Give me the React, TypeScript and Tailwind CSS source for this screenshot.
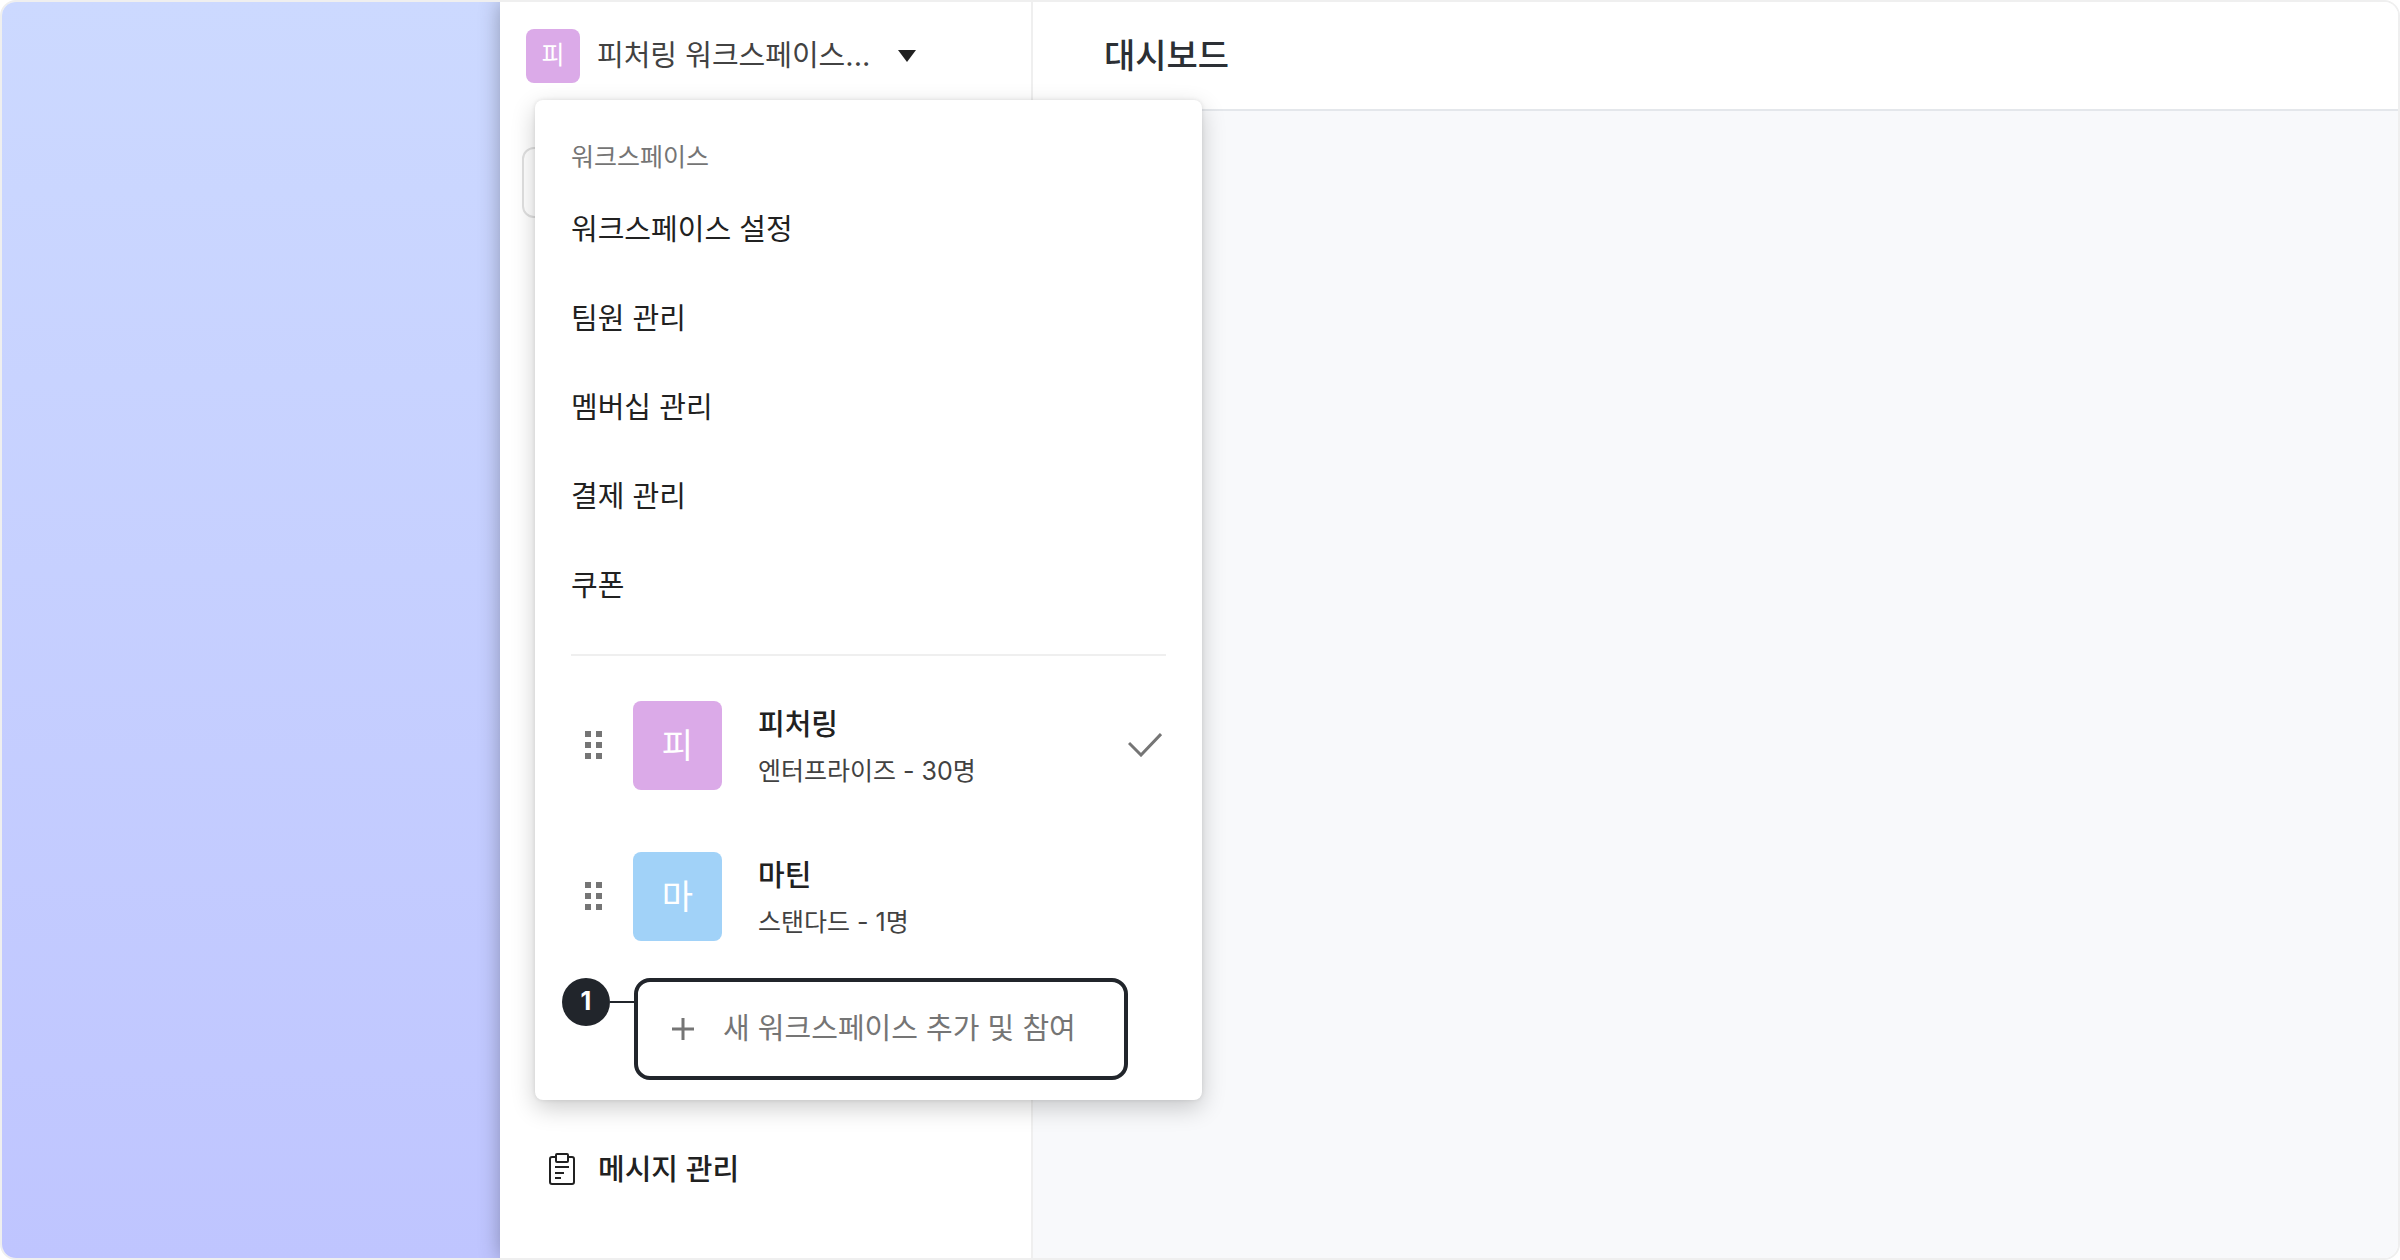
import { useState } from "react";

type Workspace = { id: string; initial: string; name: string; plan: string; color: string };

const menuItems = ["워크스페이스 설정", "팀원 관리", "멤버십 관리", "결제 관리", "쿠폰"];

const workspaces: Workspace[] = [
  { id: "featuring", initial: "피", name: "피처링", plan: "엔터프라이즈 - 30명", color: "bg-[#dbaae8]" },
  { id: "martin", initial: "마", name: "마틴", plan: "스탠다드 - 1명", color: "bg-[#a1d2f8]" },
];

export default function App() {
  const [open, setOpen] = useState(true);
  const [current, setCurrent] = useState("featuring");

  return (
    <div className="min-h-screen bg-white font-['Inter','Noto_Sans_CJK_KR',sans-serif] text-[#212121]">
      <div className="flex min-h-screen overflow-hidden rounded-2xl border-2 border-[#efefef]">
        {/* Left backdrop */}
        <div className="w-[498px] shrink-0 bg-linear-to-b from-[#ccd9ff] to-[#bfc5ff]" />

        <aside className="relative flex w-[533px] shrink-0 flex-col border-r-2 border-[#efefef] bg-white shadow-[0_0_20px_rgba(0,0,0,0.3)]">
          <div className="relative flex h-[108px] items-center pl-[26px]">
            <button onClick={() => setOpen(!open)} aria-expanded={open} className="flex items-center">
              <span className="flex size-[54px] items-center justify-center rounded-lg bg-[#dbaae8] text-[25px] text-white">피</span>
              <span className="ml-[17px] text-[29px] text-[#424242]">피처링 워크스페이스...</span>
              <svg className="ml-7 h-3 w-[18px]" viewBox="0 0 18 12" fill="#212121"><path d="M0 0h18L9 12z" /></svg>
            </button>

            {open && (
              <div className="absolute top-[98px] left-[35px] z-10 w-[667px] rounded-lg bg-white px-9 pt-[37px] pb-5 shadow-[0_8px_24px_rgba(0,0,0,0.2),0_0_4px_rgba(0,0,0,0.1)]">
                <p className="text-[25px] leading-10 text-[#757575]">워크스페이스</p>
                <nav className="mt-2 flex flex-col">
                  {menuItems.map(item => (
                    <a key={item} href="#" className="flex h-[89px] items-center text-[29px]">{item}</a>
                  ))}
                </nav>
                <hr className="mt-6 border-t-2 border-[#efefef]" />

                <ul className="mt-10 flex flex-col gap-[53px]">
                  {workspaces.map(w => (
                    <WorkspaceRow key={w.id} workspace={w} selected={w.id === current} onSelect={() => setCurrent(w.id)} />
                  ))}
                </ul>

                {/* Step marker + add button */}
                <div className="mt-[33px] -ml-[9px] flex items-start">
                  <span className="flex size-12 items-center justify-center rounded-full bg-[#21252b] text-[25px] font-bold text-white">1</span>
                  <span className="mt-[23px] h-[2px] w-6 bg-[#21252b]" />
                  <button className="flex h-[102px] w-[494px] items-center rounded-2xl border-4 border-[#21252b] pl-[34px] text-[29px] text-[#757575]">
                    <svg className="mr-[29px] size-[22px]" viewBox="0 0 22 22" fill="none" stroke="#757575" strokeWidth="3"><path d="M11 0v22M0 11h22" /></svg>
                    새 워크스페이스 추가 및 참여
                  </button>
                </div>
              </div>
            )}
          </div>

          <div className="mt-[37px] ml-[22px] h-[71px] rounded-xl border-2 border-[#e0e0e0]" />

          <a href="#" className="mt-auto mb-[67px] ml-[49px] flex items-center text-[29px] font-medium">
            <ClipboardIcon />
            <span className="ml-[23px]">메시지 관리</span>
          </a>
        </aside>

        {/* relative keeps the sidebar shadow off the content area */}
        <main className="relative flex flex-1 flex-col bg-[#f8f9fb]">
          <header className="flex h-[109px] items-center border-b-2 border-[#e4e7eb] bg-white pl-[71px]">
            <h1 className="text-[34px] font-medium text-[#2c3035]">대시보드</h1>
          </header>
        </main>
      </div>
    </div>
  );
}

function WorkspaceRow({ workspace, selected, onSelect }: { workspace: Workspace; selected: boolean; onSelect: () => void }) {
  return (
    <li className="flex items-center">
      <svg className="mr-[30px] ml-[14px] h-[30px] w-[18px]" viewBox="0 0 18 30" fill="#757575">
        <path d="M0 1h6v6H0zM11 1h6v6h-6zM0 12h6v6H0zM11 12h6v6h-6zM0 23h6v6H0zM11 23h6v6h-6z" />
      </svg>
      <button onClick={onSelect} className="flex flex-1 items-center text-left">
        <span className={`flex size-[89px] items-center justify-center rounded-lg text-[34px] text-white ${workspace.color}`}>{workspace.initial}</span>
        <span className="ml-9 flex flex-1 flex-col pt-1.5">
          <span className="text-[29px] leading-[46px] font-medium">{workspace.name}</span>
          <span className="text-[25px] leading-[46px] text-[#424242]">{workspace.plan}</span>
        </span>
        {selected && (
          <svg className="mr-1 h-6 w-[34px]" viewBox="0 0 34 24" fill="none" stroke="#757575" strokeWidth="3"><path d="M1 10l12 12L33 1" /></svg>
        )}
      </button>
    </li>
  );
}

function ClipboardIcon() {
  return (
    <svg className="h-8 w-[26px]" viewBox="0 0 26 32" fill="none" stroke="#212121" strokeWidth="2" strokeLinejoin="round">
      <path d="M7 4H3a2 2 0 0 0-2 2v23a2 2 0 0 0 2 2h20a2 2 0 0 0 2-2V6a2 2 0 0 0-2-2h-4" />
      <path d="M8 1h10a1 1 0 0 1 1 1v6a1 1 0 0 1-1 1H8a1 1 0 0 1-1-1V2a1 1 0 0 1 1-1z" />
      <path d="M6 14h14M6 20h9M6 25h6" />
    </svg>
  );
}
